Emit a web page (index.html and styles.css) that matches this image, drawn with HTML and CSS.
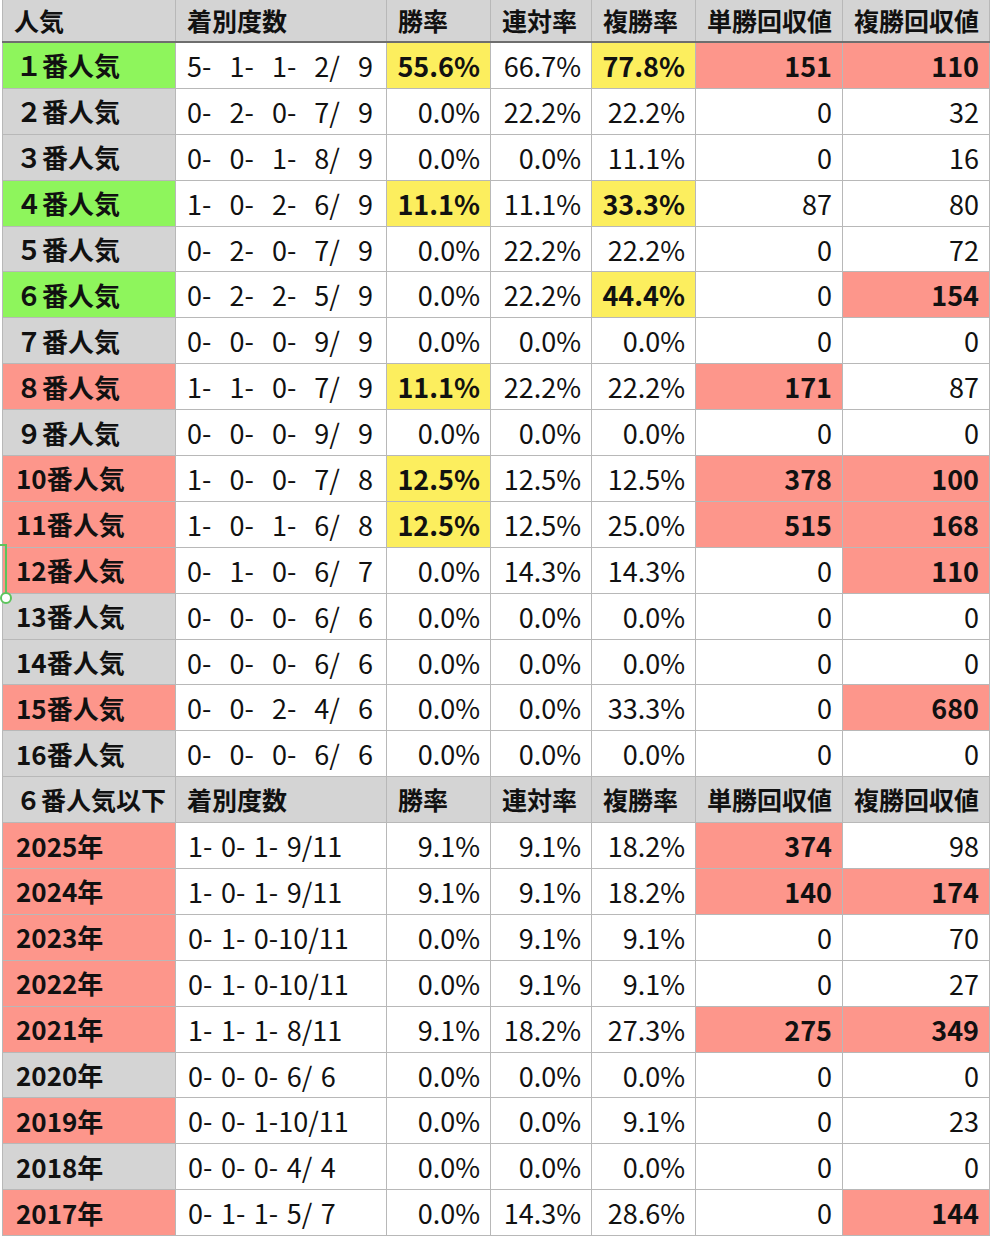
FILE: index.html
```html
<!DOCTYPE html>
<html lang="ja">
<head>
<meta charset="utf-8">
<title>人気別成績</title>
<link rel="stylesheet" href="styles.css">
</head>
<body>
<div class="sheet">
<table class="grid">
<colgroup>
<col class="c-name"><col class="c-rec"><col class="c-p1"><col class="c-p2"><col class="c-p3"><col class="c-r1"><col class="c-r2">
</colgroup>
<thead>
<tr class="head"><th>人気</th><th>着別度数</th><th>勝率</th><th>連対率</th><th>複勝率</th><th>単勝回収値</th><th>複勝回収値</th></tr>
</thead>
<tbody>
<tr><td class="name g">１番人気</td><td class="rec pop">5-  1-  1-  2/  9</td><td class="num y">55.6%</td><td class="num">66.7%</td><td class="num y">77.8%</td><td class="num p">151</td><td class="num p">110</td></tr>
<tr><td class="name">２番人気</td><td class="rec pop">0-  2-  0-  7/  9</td><td class="num">0.0%</td><td class="num">22.2%</td><td class="num">22.2%</td><td class="num">0</td><td class="num">32</td></tr>
<tr><td class="name">３番人気</td><td class="rec pop">0-  0-  1-  8/  9</td><td class="num">0.0%</td><td class="num">0.0%</td><td class="num">11.1%</td><td class="num">0</td><td class="num">16</td></tr>
<tr><td class="name g">４番人気</td><td class="rec pop">1-  0-  2-  6/  9</td><td class="num y">11.1%</td><td class="num">11.1%</td><td class="num y">33.3%</td><td class="num">87</td><td class="num">80</td></tr>
<tr><td class="name">５番人気</td><td class="rec pop">0-  2-  0-  7/  9</td><td class="num">0.0%</td><td class="num">22.2%</td><td class="num">22.2%</td><td class="num">0</td><td class="num">72</td></tr>
<tr><td class="name g">６番人気</td><td class="rec pop">0-  2-  2-  5/  9</td><td class="num">0.0%</td><td class="num">22.2%</td><td class="num y">44.4%</td><td class="num">0</td><td class="num p">154</td></tr>
<tr><td class="name">７番人気</td><td class="rec pop">0-  0-  0-  9/  9</td><td class="num">0.0%</td><td class="num">0.0%</td><td class="num">0.0%</td><td class="num">0</td><td class="num">0</td></tr>
<tr><td class="name p">８番人気</td><td class="rec pop">1-  1-  0-  7/  9</td><td class="num y">11.1%</td><td class="num">22.2%</td><td class="num">22.2%</td><td class="num p">171</td><td class="num">87</td></tr>
<tr><td class="name">９番人気</td><td class="rec pop">0-  0-  0-  9/  9</td><td class="num">0.0%</td><td class="num">0.0%</td><td class="num">0.0%</td><td class="num">0</td><td class="num">0</td></tr>
<tr><td class="name p">10番人気</td><td class="rec pop">1-  0-  0-  7/  8</td><td class="num y">12.5%</td><td class="num">12.5%</td><td class="num">12.5%</td><td class="num p">378</td><td class="num p">100</td></tr>
<tr><td class="name p">11番人気</td><td class="rec pop">1-  0-  1-  6/  8</td><td class="num y">12.5%</td><td class="num">12.5%</td><td class="num">25.0%</td><td class="num p">515</td><td class="num p">168</td></tr>
<tr><td class="name p">12番人気</td><td class="rec pop">0-  1-  0-  6/  7</td><td class="num">0.0%</td><td class="num">14.3%</td><td class="num">14.3%</td><td class="num">0</td><td class="num p">110</td></tr>
<tr><td class="name">13番人気</td><td class="rec pop">0-  0-  0-  6/  6</td><td class="num">0.0%</td><td class="num">0.0%</td><td class="num">0.0%</td><td class="num">0</td><td class="num">0</td></tr>
<tr><td class="name">14番人気</td><td class="rec pop">0-  0-  0-  6/  6</td><td class="num">0.0%</td><td class="num">0.0%</td><td class="num">0.0%</td><td class="num">0</td><td class="num">0</td></tr>
<tr><td class="name p">15番人気</td><td class="rec pop">0-  0-  2-  4/  6</td><td class="num">0.0%</td><td class="num">0.0%</td><td class="num">33.3%</td><td class="num">0</td><td class="num p">680</td></tr>
<tr><td class="name">16番人気</td><td class="rec pop">0-  0-  0-  6/  6</td><td class="num">0.0%</td><td class="num">0.0%</td><td class="num">0.0%</td><td class="num">0</td><td class="num">0</td></tr>
<tr class="sub"><th>６番人気以下</th><th>着別度数</th><th>勝率</th><th>連対率</th><th>複勝率</th><th>単勝回収値</th><th>複勝回収値</th></tr>
<tr><td class="name p">2025年</td><td class="rec yr">1- 0- 1- 9/11</td><td class="num">9.1%</td><td class="num">9.1%</td><td class="num">18.2%</td><td class="num p">374</td><td class="num">98</td></tr>
<tr><td class="name p">2024年</td><td class="rec yr">1- 0- 1- 9/11</td><td class="num">9.1%</td><td class="num">9.1%</td><td class="num">18.2%</td><td class="num p">140</td><td class="num p">174</td></tr>
<tr><td class="name p">2023年</td><td class="rec yr">0- 1- 0-10/11</td><td class="num">0.0%</td><td class="num">9.1%</td><td class="num">9.1%</td><td class="num">0</td><td class="num">70</td></tr>
<tr><td class="name p">2022年</td><td class="rec yr">0- 1- 0-10/11</td><td class="num">0.0%</td><td class="num">9.1%</td><td class="num">9.1%</td><td class="num">0</td><td class="num">27</td></tr>
<tr><td class="name p">2021年</td><td class="rec yr">1- 1- 1- 8/11</td><td class="num">9.1%</td><td class="num">18.2%</td><td class="num">27.3%</td><td class="num p">275</td><td class="num p">349</td></tr>
<tr><td class="name">2020年</td><td class="rec yr">0- 0- 0- 6/ 6</td><td class="num">0.0%</td><td class="num">0.0%</td><td class="num">0.0%</td><td class="num">0</td><td class="num">0</td></tr>
<tr><td class="name p">2019年</td><td class="rec yr">0- 0- 1-10/11</td><td class="num">0.0%</td><td class="num">0.0%</td><td class="num">9.1%</td><td class="num">0</td><td class="num">23</td></tr>
<tr><td class="name">2018年</td><td class="rec yr">0- 0- 0- 4/ 4</td><td class="num">0.0%</td><td class="num">0.0%</td><td class="num">0.0%</td><td class="num">0</td><td class="num">0</td></tr>
<tr><td class="name p">2017年</td><td class="rec yr">0- 1- 1- 5/ 7</td><td class="num">0.0%</td><td class="num">14.3%</td><td class="num">28.6%</td><td class="num">0</td><td class="num p">144</td></tr>
</tbody>
</table>
<div class="handle"><span class="handle-dot"></span></div>
</div>
</body>
</html>
```

FILE: styles.css
```css
html, body {
  margin: 0;
  padding: 0;
  background: #ffffff;
}
body {
  font-family: "Noto Sans CJK JP", "Noto Sans", sans-serif;
  color: #111111;
}
.sheet {
  position: relative;
  width: 992px;
  height: 1240px;
  overflow: hidden;
  padding-left: 2px;
  box-sizing: border-box;
}
.grid {
  border-collapse: collapse;
  table-layout: fixed;
  width: 987px;
  border-left: 1px solid #8a8a8a;
  border-right: 1px solid #a8a8a8;
}
.c-name { width: 173px; }
.c-rec { width: 211px; }
.c-p1 { width: 104px; }
.c-p2 { width: 101px; }
.c-p3 { width: 104px; }
.c-r1 { width: 147px; }
.c-r2 { width: 147px; }

.grid th, .grid td {
  border: 1px solid #b8b8b8;
  height: 44.9px;
  padding: 0;
  font-size: 27px;
  line-height: 1;
  white-space: pre;
  overflow: hidden;
}
.grid th {
  background: #d4d4d4;
  font-weight: 700;
  text-align: left;
  padding-left: 11px;
  font-size: 25px;
}
.head th {
  height: 41px;
  border-top: none;
  border-bottom: 2px solid #6e6e6e;
}
.grid td.name {
  background: #d4d4d4;
  font-weight: 700;
  padding-left: 13px;
  font-size: 26px;
}
.grid .sub th:first-child {
  padding-left: 13px;
}
.grid td.rec {
  padding-left: 11px;
  font-weight: 400;
}
.grid td.pop {
  word-spacing: 3px;
}
.grid td.yr {
  padding-left: 12px;
  word-spacing: 2.5px;
}
.grid td.num {
  text-align: right;
  padding-right: 10px;
  font-weight: 400;
}
.grid td.g { background: #8ef55c; }
.grid td.y { background: #fcee5e; font-weight: 700; }
.grid td.p { background: #fd968b; font-weight: 700; }

.handle {
  position: absolute;
  left: 5px;
  top: 544px;
  width: 2px;
  height: 54px;
  background: #5cc45c;
}
.handle::before {
  content: "";
  position: absolute;
  left: -5px;
  top: 0;
  width: 5px;
  height: 2px;
  background: #5cc45c;
}
.handle-dot {
  position: absolute;
  left: -5px;
  top: 48px;
  width: 8px;
  height: 8px;
  border: 2px solid #5cc45c;
  border-radius: 50%;
  background: #ffffff;
}
```
